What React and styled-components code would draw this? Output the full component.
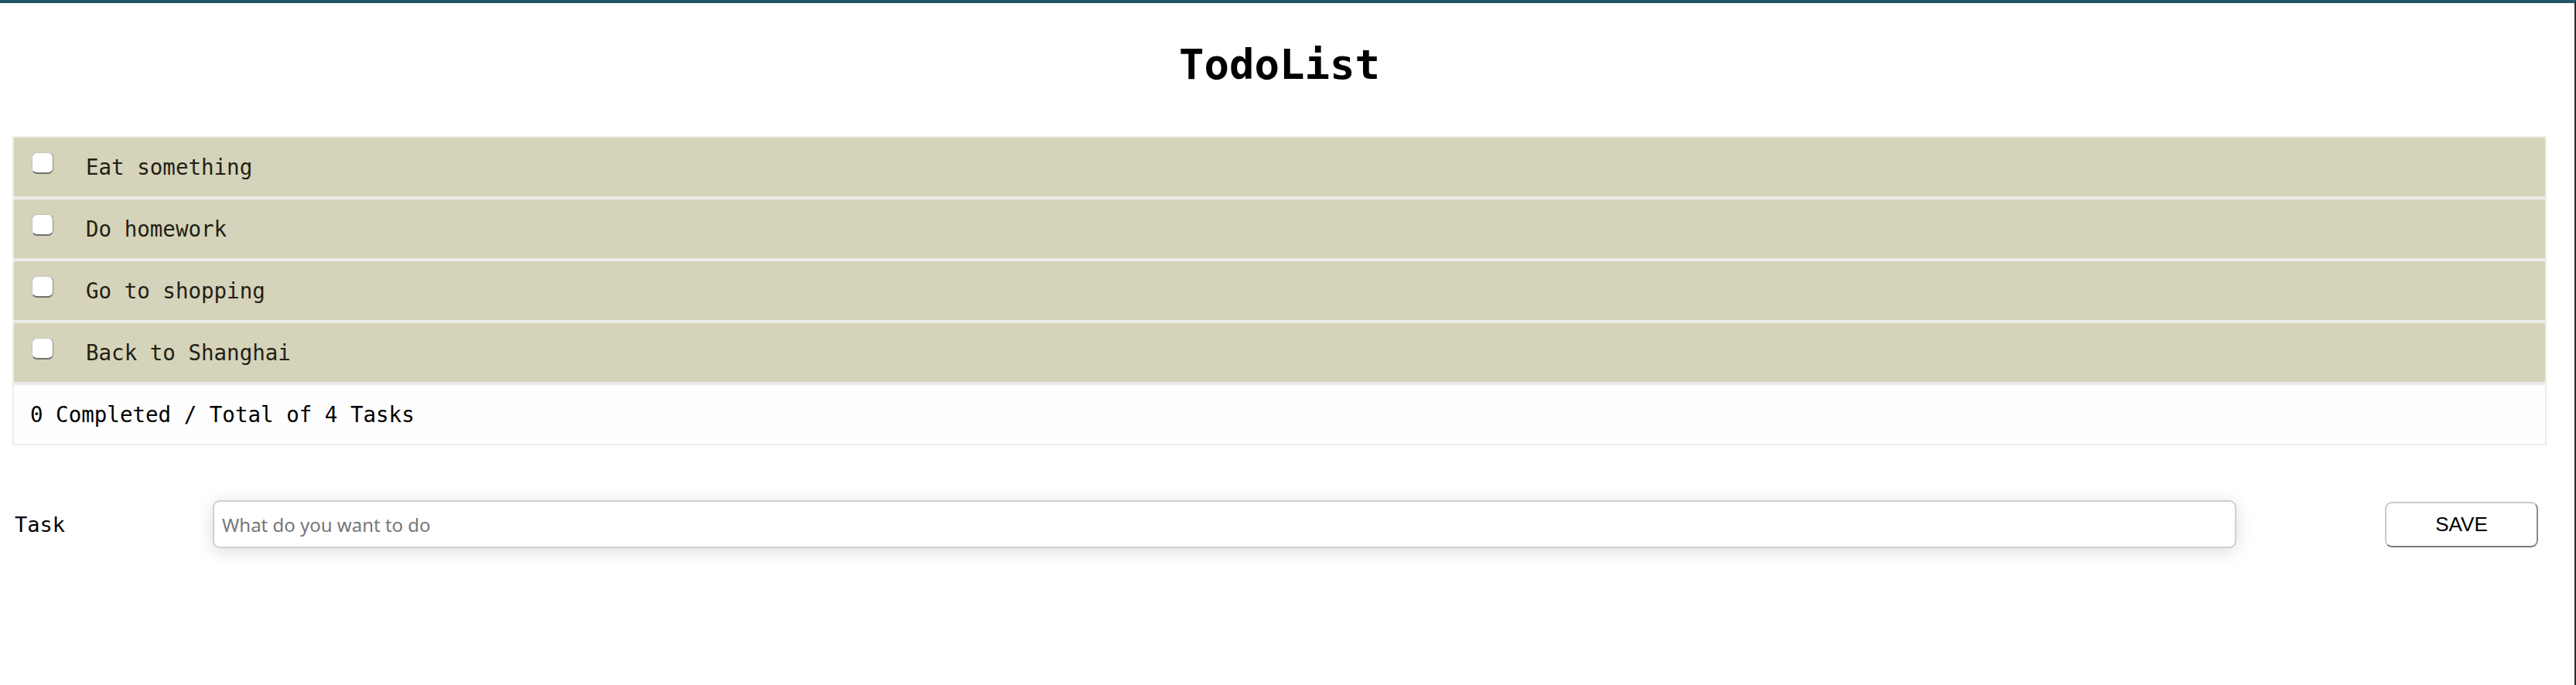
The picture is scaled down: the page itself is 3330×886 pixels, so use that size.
import React, { useState } from "react";
import styled, { createGlobalStyle } from "styled-components";

const GlobalStyle = createGlobalStyle`
  html, body {
    margin: 0;
    padding: 0;
    background: #fff;
  }
  body {
    font-family: "DejaVu Sans Mono", monospace;
  }
`;

const Page = styled.div`
  box-sizing: border-box;
  min-height: 100vh;
  border-top: 4px solid #235564;
  border-right: 2px solid #2b2b2b;
  padding: 0 36px 0 16px;
`;

const Title = styled.h1`
  margin: 0;
  padding: 53px 0 65px;
  font-family: "DejaVu Sans Mono", monospace;
  font-size: 54px;
  line-height: 54px;
  font-weight: 700;
  text-align: center;
  color: #000;
`;

const List = styled.ul`
  list-style: none;
  margin: 0;
  padding: 0;
`;

const Item = styled.li`
  box-sizing: border-box;
  display: flex;
  align-items: center;
  height: 80px;
  border: 2px solid #ececec;
  background: ${({ $footer }) => ($footer ? "#fefefe" : "#d5d3ba")};
  padding-left: ${({ $footer }) => ($footer ? "21px" : "23px")};
  font-size: 27.5px;
  color: ${({ $footer }) => ($footer ? "#000" : "#231f14")};
`;

const Check = styled.input.attrs({ type: "checkbox" })`
  appearance: none;
  -webkit-appearance: none;
  box-sizing: border-box;
  flex: 0 0 auto;
  width: 28px;
  height: 28px;
  margin: 0 42px 10px 0;
  border-radius: 7px;
  background: #fff;
  border: 1px solid #c4c4c4;
  border-right-color: #8a8a8a;
  border-bottom: 2px solid #6f6f6f;
  cursor: pointer;

  &:checked {
    background: #3b82f6;
    border-color: #2f6fd8;
  }
`;

const Label = styled.span`
  white-space: pre;
`;

const Form = styled.form`
  display: flex;
  align-items: center;
  margin-top: 71px;
`;

const FieldLabel = styled.label`
  flex: 0 0 259px;
  box-sizing: border-box;
  padding-left: 3px;
  font-family: "DejaVu Sans Mono", monospace;
  font-size: 27px;
  color: #000;
`;

const Input = styled.input`
  flex: 1;
  box-sizing: border-box;
  height: 62px;
  padding: 0 10px;
  border: 2px solid #cfcfcf;
  border-radius: 9px;
  box-shadow: 0 4px 22px rgba(0, 0, 0, 0.14);
  font-family: "Noto Sans", sans-serif;
  font-size: 24px;
  color: #222;
  outline: none;

  &::placeholder {
    color: #767676;
  }
`;

const SaveButton = styled.button`
  box-sizing: border-box;
  flex: 0 0 198px;
  height: 59px;
  margin: 0 11px 0 192px;
  background: #fff;
  border: 2px solid #cacaca;
  border-right-color: #8c8c8c;
  border-bottom-color: #7a7a7a;
  border-radius: 9px;
  font-family: "Liberation Sans", Arial, sans-serif;
  font-size: 26px;
  color: #000;
  cursor: pointer;
`;

const initialTodos = [
  { id: 1, text: "Eat something", done: false },
  { id: 2, text: "Do homework", done: false },
  { id: 3, text: "Go to shopping", done: false },
  { id: 4, text: "Back to Shanghai", done: false },
];

export default function App() {
  const [todos, setTodos] = useState(initialTodos);
  const [task, setTask] = useState("");

  const toggle = (id) =>
    setTodos((list) =>
      list.map((t) => (t.id === id ? { ...t, done: !t.done } : t))
    );

  const save = (e) => {
    e.preventDefault();
    if (!task.trim()) return;
    setTodos((list) => [...list, { id: Date.now(), text: task, done: false }]);
    setTask("");
  };

  const completed = todos.filter((t) => t.done).length;

  return (
    <Page>
      <GlobalStyle />
      <Title>TodoList</Title>
      <List>
        {todos.map((t) => (
          <Item key={t.id}>
            <Check checked={t.done} onChange={() => toggle(t.id)} />
            <Label>{t.text}</Label>
          </Item>
        ))}
        <Item $footer>
          {completed} Completed / Total of {todos.length} Tasks
        </Item>
      </List>
      <Form onSubmit={save}>
        <FieldLabel htmlFor="task">Task</FieldLabel>
        <Input
          id="task"
          placeholder="What do you want to do"
          value={task}
          onChange={(e) => setTask(e.target.value)}
        />
        <SaveButton type="submit">SAVE</SaveButton>
      </Form>
    </Page>
  );
}
